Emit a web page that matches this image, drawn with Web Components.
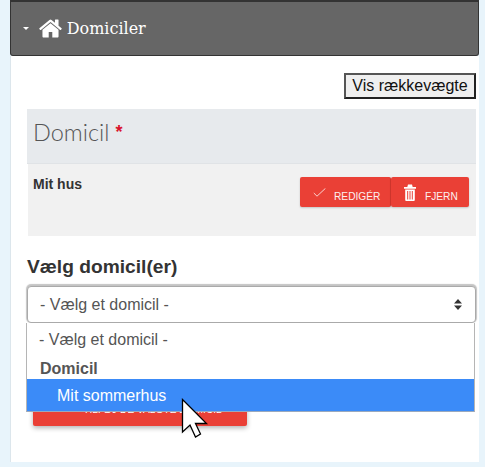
<!DOCTYPE html>
<html>
<head>
<meta charset="utf-8">
<title>Domiciler</title>
<style>
  html, body { margin: 0; height: 467px; overflow: hidden; }
  body { background: #e8f4fb; font-family: "Liberation Sans", Arial, sans-serif; color: #333; }
</style>
</head>
<body>
<domicile-panel heading="Domiciler">
  <div style="display:flex;justify-content:flex-end"><range-toggle>Vis rækkevægte</range-toggle></div>
  <domicile-list title-text="Domicil">
    <domicile-row name="Mit hus"></domicile-row>
  </domicile-list>
  <domicile-picker label="Vælg domicil(er)" placeholder="- Vælg et domicil -" group="Domicil" option="Mit sommerhus" action="TILFØJ DE VALGTE DOMICIL"></domicile-picker>
</domicile-panel>
<mouse-cursor></mouse-cursor>

<script>
const HOME = 'M1472 992v480q0 26-19 45t-45 19h-384v-384h-256v384h-384q-26 0-45-19t-19-45v-480q0-1 .5-3t.5-3l575-474 575 474q1 2 1 6zm223-69l-62 74q-8 9-21 11h-3q-13 0-21-7l-692-577-692 577q-12 8-24 7-13-2-21-11l-62-74q-8-10-7-23.500t11-21.500l719-599q32-26 76-26t76 26l244 204v-195q0-14 9-23t23-9h192q14 0 23 9t9 23v408l219 182q10 8 11 21.500t-7 23.500z';

class DomicilePanel extends HTMLElement {
  constructor() {
    super();
    this.attachShadow({ mode: 'open' });
    this.shadowRoot.innerHTML = `
      <style>
        :host { display: block; margin-left: 10px; width: 469px; }
        .head {
          height: 56px;
          box-sizing: border-box;
          background: #666;
          border: 1px solid #333;
          border-top-width: 2px;
          border-radius: 0 0 3px 3px;
          color: #fff;
          display: flex;
          align-items: center;
          padding-left: 12px;
          font: 16px "DejaVu Serif", serif;
        }
        .caret { border: 3.500px solid transparent; border-top-color: #fff; border-bottom-width: 0; margin-right: 8.700px; }
        svg { width: 25px; height: 25px; fill: #fff; margin: -1px 4px 0 0; flex: none; }
        .body {
          height: 406px;
          box-sizing: border-box;
          background: #fff;
          border-left: 1px solid #dce6ec;
          padding: 17px 3px 0 16px;
        }
      </style>
      <div class="head">
        <span class="caret"></span>
        <svg viewBox="0 0 1792 1792"><path d="${HOME}"/></svg>
        <span>${this.getAttribute('heading')}</span>
      </div>
      <div class="body"><slot></slot></div>
    `;
  }
}

class RangeToggle extends HTMLElement {
  constructor() {
    super();
    this.attachShadow({ mode: 'open' });
    this.shadowRoot.innerHTML = `
      <style>
        :host {
          display: block;
          box-sizing: border-box;
          width: 132px;
          height: 26px;
          text-align: center;
          background: #efefef;
          color: #111;
          border: 2px solid;
          border-color: #555 #222 #222 #555;
          font: 16px/22px "Liberation Sans", Arial, sans-serif;
        }
      </style>
      <slot></slot>
    `;
  }
}

class DomicileList extends HTMLElement {
  constructor() {
    super();
    this.attachShadow({ mode: 'open' });
    this.shadowRoot.innerHTML = `
      <style>
        :host { display: block; margin-top: 10px; }
        .title {
          height: 55px;
          box-sizing: border-box;
          background: #e7eaed;
          border-bottom: 1px solid #e0e3e6;
          padding: 0 0 8px 6px;
          display: flex;
          align-items: center;
          gap: 6px;
          color: #555;
          font: 300 23.500px Lato, sans-serif;
        }
        .req { color: #d9132c; font: bold 18px "Liberation Sans", sans-serif; }
      </style>
      <div class="title">${this.getAttribute('title-text')} <span class="req">*</span></div>
      <slot></slot>
    `;
  }
}

class DomicileRow extends HTMLElement {
  constructor() {
    super();
    this.attachShadow({ mode: 'open' });
    this.shadowRoot.innerHTML = `
      <style>
        :host {
          display: flex;
          justify-content: space-between;
          height: 72px;
          box-sizing: border-box;
          margin-left: 1px;
          background: #f1f1f1;
          padding: 12px 7px 0 5px;
        }
        .name { font: bold 14px/16px "Liberation Sans", sans-serif; color: #333; }
        .btns { display: flex; align-items: flex-start; margin-top: 1px; }
        .btn {
          height: 30px;
          box-sizing: border-box;
          display: flex;
          align-items: center;
          background: #ea4036;
          color: #fff;
          font: 10.200px "Liberation Sans", sans-serif;
          border-radius: 2px;
          box-shadow: 0 1px 2px rgba(0,0,0,.18);
        }
        .btn span { margin-top: 8px; opacity: .92; }
        .edit { width: 91px; padding-left: 13px; gap: 8px; border-right: 1px solid #d8382f; }
        .del { width: 78px; padding-left: 13px; gap: 9px; }
        svg { flex: none; }
        .edit svg { margin-top: 1px; }
      </style>
      <div class="name">${this.getAttribute('name')}</div>
      <div class="btns">
        <div class="btn edit">
          <svg width="13" height="9" viewBox="0 0 13 9"><path d="M.8 5l3.200 3.200 8.400-7.800" fill="none" stroke="#fff" stroke-width=".9" opacity=".85"/></svg>
          <span>REDIGÉR</span>
        </div>
        <div class="btn del">
          <svg width="12" height="17" viewBox="0 0 12 17">
            <path fill="#fff" d="M0 3h12v1.800H0zM4 .5h4l.7 2.500H3.300zM1.200 5.400h9.600V16a1 1 0 0 1-1 1H2.200a1 1 0 0 1-1-1z"/>
            <path stroke="#ea4036" stroke-width="1" d="M3.700 7v8.500M6 7v8.500M8.300 7v8.500"/>
          </svg>
          <span>FJERN</span>
        </div>
      </div>
    `;
  }
}

class DomicilePicker extends HTMLElement {
  constructor() {
    super();
    this.attachShadow({ mode: 'open' });
    const a = (n) => this.getAttribute(n);
    this.shadowRoot.innerHTML = `
      <style>
        :host { display: block; position: relative; margin-top: 20px; }
        label { display: block; font: bold 19.200px/20px "Liberation Sans", sans-serif; color: #333; padding-top: 1px; }
        .select {
          height: 37px;
          margin-top: 9px;
          box-sizing: border-box;
          background: #fff;
          border: 1px solid #aaa;
          border-radius: 4px;
          box-shadow: 0 -1px 1px 1px #c4c4c4;
          display: flex;
          align-items: center;
          justify-content: space-between;
          padding: 1px 13px 0 12px;
          font: 16px "Liberation Sans", sans-serif;
          color: #555;
        }
        .arrows { width: 8px; height: 11px; margin-top: -1px; }
        .action {
          box-sizing: border-box;
          width: 214px;
          height: 32px;
          margin: 71px 0 0 6px;
          padding-left: 25px;
          background: #ea4036;
          color: #fff;
          border-radius: 2px;
          box-shadow: 0 2px 5px rgba(0,0,0,.3);
          font: 10.200px/32px "Liberation Sans", sans-serif;
          text-align: center;
        }
        .menu {
          position: absolute;
          left: -1px;
          right: 1px;
          top: 67px;
          background: #fff;
          border: 1px solid #b5b5b5;
          border-top: 0;
          border-bottom-color: #9aa9bd;
          font: 16px "Liberation Sans", sans-serif;
          color: #555;
        }
        .menu div { box-sizing: border-box; padding-left: 12px; }
        .first { height: 29px; line-height: 34px; }
        .group { height: 27px; line-height: 33px; font-weight: bold; padding-left: 13px !important; }
        .opt { height: 32px; line-height: 33px; background: #3b8bf8; color: #fff; padding-left: 30px !important; }
      </style>
      <label>${a('label')}</label>
      <div class="select">
        <span>${a('placeholder')}</span>
        <svg class="arrows" viewBox="0 0 8 11"><path d="M4 0l4 4.500H0zM4 11L0 6.500h8z" fill="#333"/></svg>
      </div>
      <div class="action">${a('action')}</div>
      <div class="menu">
        <div class="first">${a('placeholder')}</div>
        <div class="group">${a('group')}</div>
        <div class="opt">${a('option')}</div>
      </div>
    `;
  }
}

class MouseCursor extends HTMLElement {
  constructor() {
    super();
    this.attachShadow({ mode: 'open' });
    this.shadowRoot.innerHTML = `
      <style>
        :host { position: absolute; left: 181px; top: 398px; display: block; width: 28px; height: 41px; }
      </style>
      <svg width="28" height="41" viewBox="0 0 28 41"><path d="M1.500 1.500v32.500l7.500-7 5.500 12 5-3-5-10.500h11z" fill="#fff" stroke="#000" stroke-width="1.300"/></svg>
    `;
  }
}

customElements.define('domicile-panel', DomicilePanel);
customElements.define('range-toggle', RangeToggle);
customElements.define('domicile-list', DomicileList);
customElements.define('domicile-row', DomicileRow);
customElements.define('domicile-picker', DomicilePicker);
customElements.define('mouse-cursor', MouseCursor);
</script>
</body>
</html>
